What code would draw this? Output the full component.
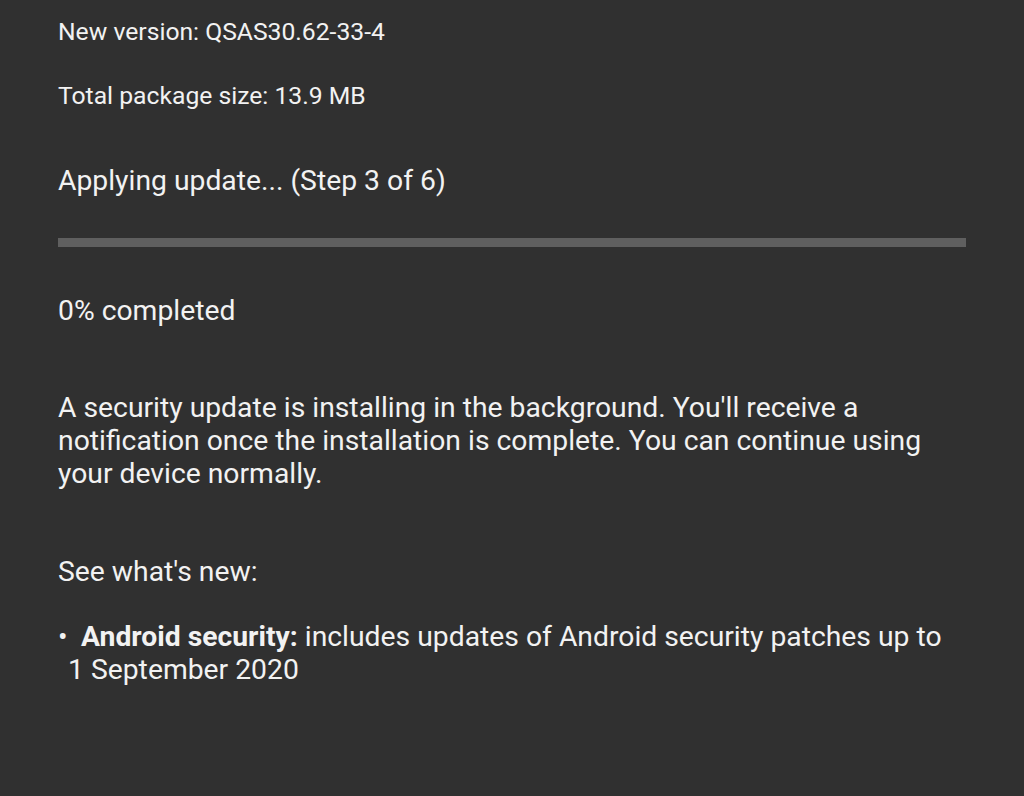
import React from "react";

const App = () => {
  return (
    <div className="w-[1024px] h-[796px] bg-[#303030] text-[#f2f2f2] font-['Roboto',sans-serif] overflow-hidden">
      <div className="px-[58px] pt-[16px]">
        <p className="text-[24.7px] leading-[32px]">New version: QSAS30.62-33-4</p>
        <p className="text-[24.7px] leading-[32px] mt-[32px]">Total package size: 13.9 MB</p>
        <p className="text-[28.3px] leading-[36px] mt-[51px]">Applying update... (Step 3 of 6)</p>
        <div className="mt-[39px] h-[9px] bg-[#5f5f5f]"></div>
        <p className="text-[28.3px] leading-[36px] mt-[46px]">0% completed</p>
        <p className="text-[28.3px] leading-[33px] mt-[62px]">
          A security update is installing in the background. You'll receive a<br />
          notification once the installation is complete. You can continue using<br />
          your device normally.
        </p>
        <p className="text-[28.3px] leading-[36px] mt-[64px]">See what's new:</p>
        <p className="text-[28.3px] leading-[33px] mt-[30px] pl-[10px] -indent-[10px]">
          <span className="inline-block w-[23px] indent-0">•</span>
          <span className="font-bold">Android security:</span> includes updates of Android security
          patches up to
          <br />
          1 September 2020
        </p>
      </div>
    </div>
  );
};

export default App;
